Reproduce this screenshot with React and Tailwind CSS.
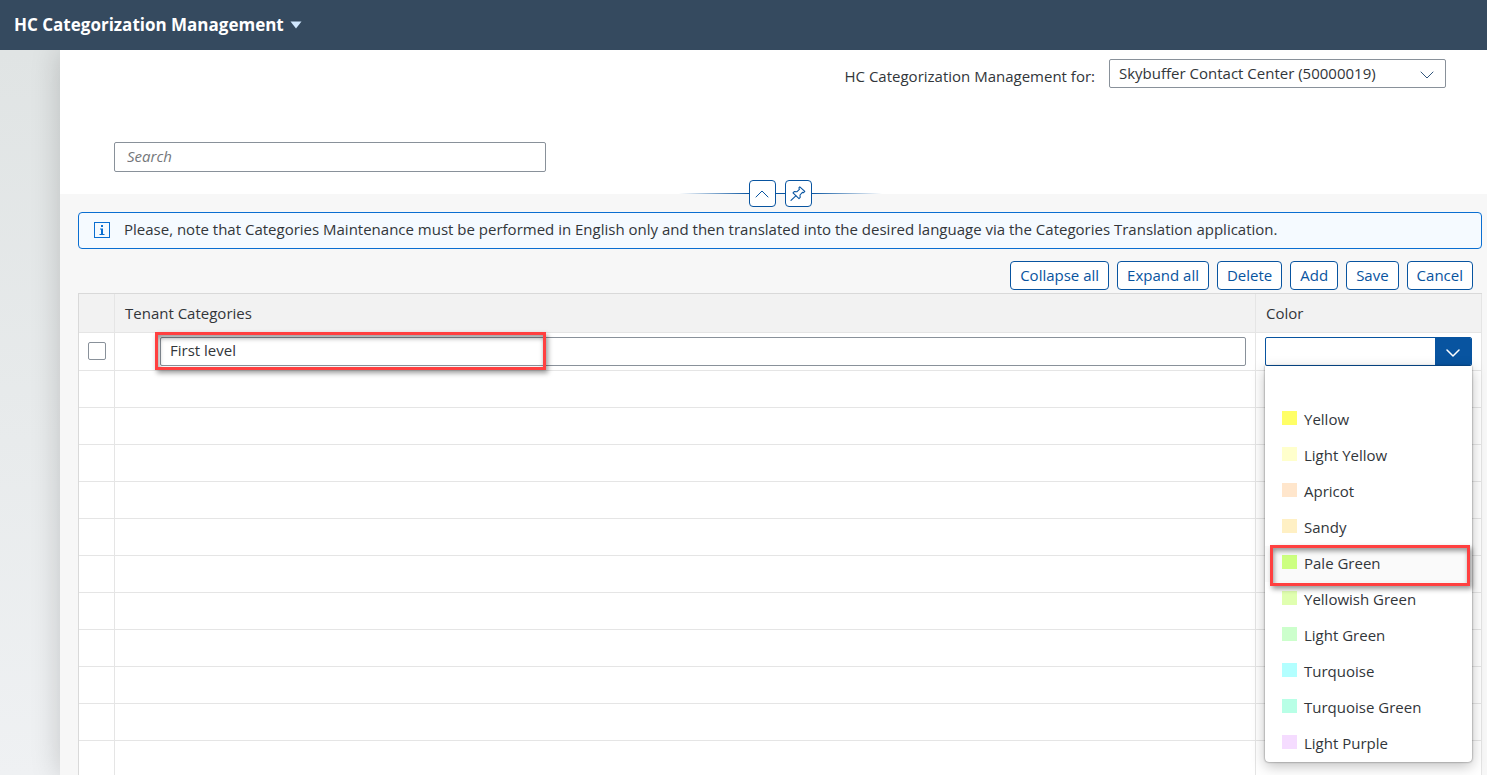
import React from 'react';

const colors = [
  { name: '', swatch: '' },
  { name: 'Yellow', swatch: 'bg-[#ffff66]' },
  { name: 'Light Yellow', swatch: 'bg-[#ffffcc]' },
  { name: 'Apricot', swatch: 'bg-[#ffe6cc]' },
  { name: 'Sandy', swatch: 'bg-[#fff0c4]' },
  { name: 'Pale Green', swatch: 'bg-[#ccff80]' },
  { name: 'Yellowish Green', swatch: 'bg-[#e0ffb0]' },
  { name: 'Light Green', swatch: 'bg-[#ccffcc]' },
  { name: 'Turquoise', swatch: 'bg-[#b3ffff]' },
  { name: 'Turquoise Green', swatch: 'bg-[#b8ffe6]' },
  { name: 'Light Purple', swatch: 'bg-[#f5dcff]' },
];

const actions = ['Collapse all', 'Expand all', 'Delete', 'Add', 'Save', 'Cancel'];

const emptyRows = Array.from({ length: 11 }, (_, i) => i);

const Chevron = ({ up, className }) => (
  <svg viewBox="0 0 14 8" className={className} fill="none" stroke="currentColor" strokeLinecap="round" strokeLinejoin="round" aria-hidden="true">
    <path d={up ? 'M1 7 L7 1 L13 7' : 'M1 1 L7 7 L13 1'} />
  </svg>
);

const PinIcon = () => (
  <svg viewBox="0 0 16 16" className="w-4 h-4" fill="none" stroke="currentColor" strokeLinejoin="round" strokeLinecap="round" strokeWidth="1.1" aria-hidden="true">
    <path d="M9.8 0.8 L14.8 5.4 L13.6 6.6 L12.4 6.4 L10 9 L10.2 11.4 L9 12.6 L3 6.8 L4.2 5.6 L6.8 5.8 L9.4 3.4 L8.9 1.8 Z" />
    <path d="M5.8 9.8 L1 14.4" />
  </svg>
);

const InfoIcon = () => (
  <svg viewBox="0 0 16 16" className="w-4 h-4 shrink-0 text-[#0a6ed1]" fill="none" aria-hidden="true">
    <rect x="0.5" y="0.5" width="15" height="15" stroke="currentColor" />
    <path d="M7 3h2v2H7z M6 6.5h3V12h1.5v1h-5v-1H7V7.5H6z" fill="currentColor" />
  </svg>
);

const App = () => {
  return (
    <div className="h-screen flex flex-col overflow-hidden bg-[#e4e8e8] font-['Open_Sans',sans-serif] text-[15px] text-[#32363a]">
      {/* Shell bar */}
      <header className="relative z-10 flex h-[50px] shrink-0 items-center bg-[#354a5f] px-[14px]">
        <button className="flex items-center gap-[6px] text-[17px] font-bold text-white">
          HC Categorization Management
          <svg viewBox="0 0 12 8" className="w-3 h-2 text-[#d1e8ff]" fill="currentColor" aria-hidden="true">
            <path d="M0.5 0.5h11L6 7.5z" />
          </svg>
        </button>
      </header>

      <div className="flex min-h-0 flex-1 bg-linear-to-b from-[#e0e4e4] to-[#eff1f3] pl-[60px]">
        <main className="min-w-0 flex-1 bg-[#f7f7f7] shadow-[0_0_28px_rgba(0,0,0,0.18)]">
          {/* Page header */}
          <div className="h-36 bg-white pt-[9px]">
            <div className="flex items-center justify-end gap-[14px] pr-[41px]">
              <label htmlFor="tenant" className="pt-[6px]">HC Categorization Management for:</label>
              <div className="relative w-[337px]">
                <select id="tenant" className="h-[29px] w-full appearance-none rounded-xs border border-[#89919a] bg-white pl-[9px] pr-10">
                  <option>Skybuffer Contact Center (50000019)</option>
                </select>
                <Chevron className="pointer-events-none absolute right-3 top-3 h-2 w-[14px] text-[#32567c]" />
              </div>
            </div>
            <div className="pl-[54px] pt-[54px]">
              <input
                type="text"
                aria-label="Search"
                placeholder="Search"
                className="h-[30px] w-[432px] rounded-xs border border-[#89919a] bg-white px-3 pb-[2px] placeholder:italic placeholder:text-[#74777a]"
              />
            </div>
          </div>

          {/* Collapse / pin header */}
          <div className="-mt-[14px] flex items-center justify-center pl-[18px] pr-[5px]">
            <span className="h-px w-[70px] bg-linear-to-r from-transparent to-[#0854a0]" />
            <button aria-label="Collapse header" className="flex size-[27px] items-center justify-center rounded-[4px] border border-[#0854a0] bg-white text-[#0854a0]">
              <Chevron up className="h-2 w-[14px]" />
            </button>
            <span className="h-px w-[9px] bg-[#0854a0]" />
            <button aria-label="Pin header" className="flex size-[27px] items-center justify-center rounded-[4px] border border-[#0854a0] bg-white text-[#0854a0]">
              <PinIcon />
            </button>
            <span className="h-px w-[70px] bg-linear-to-l from-transparent to-[#0854a0]" />
          </div>

          <div className="pl-[18px] pr-[5px] pt-[5px]">
            <div className="flex h-[37px] items-center gap-[14px] rounded-[4px] border border-[#0a6ed1] bg-[#f5faff] px-[15px] pb-px">
              <InfoIcon />
              <p className="pb-px">
                Please, note that Categories Maintenance must be performed in English only and then translated into the desired language via the Categories Translation application.
              </p>
            </div>

            {/* Toolbar */}
            <div className="flex justify-end gap-2 pb-[3px] pr-[9px] pt-3">
              {actions.map((action) => (
                <button key={action} className="h-[29px] rounded-[4px] border border-[#0854a0] bg-white px-[9px] text-[#0854a0]">
                  {action}
                </button>
              ))}
            </div>

            {/* Categories table */}
            <table className="w-full table-fixed border-separate border-spacing-0 border-l border-t border-[#d9d9d9] bg-white">
              <colgroup>
                <col className="w-9" />
                <col />
                <col className="w-[226px]" />
              </colgroup>
              <thead>
                <tr className="h-[39px] bg-[#f2f2f2] text-left">
                  <th aria-label="Select" className="border-b border-r border-[#e5e5e5]"></th>
                  <th className="border-b border-r border-[#e5e5e5] px-[10px] font-normal">Tenant Categories</th>
                  <th className="border-b border-r border-[#e5e5e5] px-[10px] font-normal">Color</th>
                </tr>
              </thead>
              <tbody>
                <tr className="h-[38px]">
                  <td className="border-b border-r border-[#e5e5e5] p-0 pb-[2px]">
                    <input
                      type="checkbox"
                      aria-label="Select First level"
                      className="mx-auto block size-[18px] appearance-none rounded-xs border border-[#89919a] bg-white"
                    />
                  </td>
                  <td className="border-b border-r border-[#e5e5e5] p-0">
                    <div className="relative pl-[45px] pr-[9px]">
                      <input
                        type="text"
                        aria-label="Tenant category"
                        defaultValue="First level"
                        className="block h-[29px] w-full rounded-xs border border-[#89919a] bg-white px-[9px] pb-[3px]"
                      />
                      <div className="pointer-events-none absolute -top-[5px] left-10 h-[38px] w-[391px] border-3 border-[#ff4040] shadow-[2px_3px_5px_rgba(0,0,0,0.4),inset_1px_3px_5px_rgba(0,0,0,0.4)]" />
                    </div>
                  </td>
                  <td className="border-b border-r border-[#e5e5e5] p-0">
                    <div className="relative px-[9px]">
                      <div className="flex h-[29px] overflow-hidden rounded-xs border border-[#0854a0] bg-white">
                        <input type="text" role="combobox" aria-label="Color" aria-expanded="true" aria-controls="color-list" className="min-w-0 flex-1 px-2 outline-none" />
                        <button aria-label="Show colors" className="flex w-9 items-center justify-center bg-[#0854a0] text-white">
                          <Chevron className="mt-[3px] h-2 w-[14px] stroke-[1.5]" />
                        </button>
                      </div>
                      <ul
                        id="color-list"
                        role="listbox"
                        className="absolute left-[9px] right-[9px] top-full rounded-b-[4px] bg-white shadow-[0_0_2px_rgba(0,0,0,0.6),0_4px_14px_rgba(0,0,0,0.25)]"
                      >
                        {colors.map(({ name, swatch }) => (
                          <li
                            key={name}
                            role="option"
                            aria-selected={name === 'Pale Green'}
                            className={`flex h-9 items-center gap-[7px] px-[17px] pb-px ${name === 'Pale Green' ? 'relative bg-[#fafafa]' : ''}`}
                          >
                            {swatch && <span className={`mb-[3px] h-[14px] w-[15px] ${swatch}`} />}
                            <span>{name}</span>
                            {name === 'Pale Green' && (
                              <div className="pointer-events-none absolute -top-px left-[5px] right-[2px] z-10 h-[41px] border-3 border-[#ff4040] shadow-[2px_3px_5px_rgba(0,0,0,0.4),inset_1px_3px_5px_rgba(0,0,0,0.4)]" />
                            )}
                          </li>
                        ))}
                      </ul>
                    </div>
                  </td>
                </tr>
                {emptyRows.map((row) => (
                  <tr key={row} className="h-[37px]">
                    <td className="border-b border-r border-[#e5e5e5]"></td>
                    <td className="border-b border-r border-[#e5e5e5]"></td>
                    <td className="border-b border-r border-[#e5e5e5]"></td>
                  </tr>
                ))}
              </tbody>
            </table>
          </div>
        </main>
      </div>
    </div>
  );
};

export default App;
